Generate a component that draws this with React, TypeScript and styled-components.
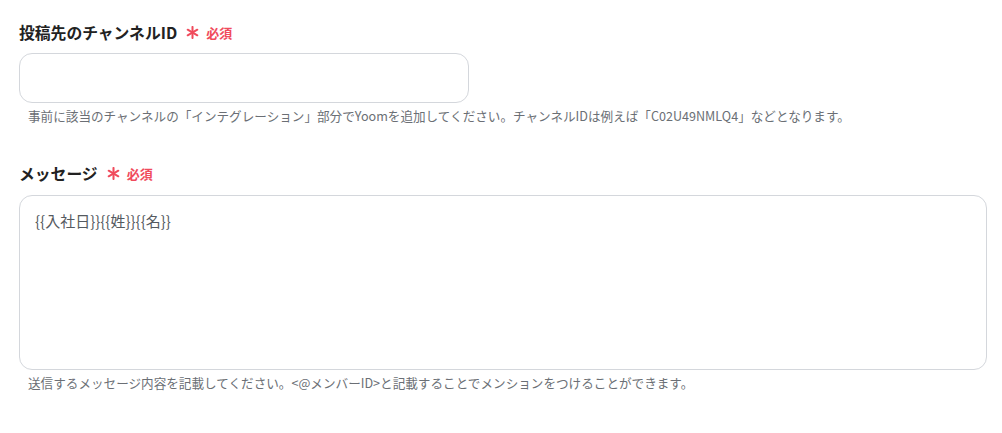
import React from "react";
import styled, { createGlobalStyle } from "styled-components";

const Global = createGlobalStyle`
  html, body { margin: 0; padding: 0; background: #ffffff; }
  body { font-family: "Noto Sans CJK JP", "Noto Sans", sans-serif; }
`;

const Page = styled.div`
  padding: 20px 0 0 19px;
  display: flex;
  flex-direction: column;
  gap: 36px;
  width: 968px;
`;

const Field = styled.div`
  display: flex;
  flex-direction: column;
`;

const LabelRow = styled.div<{ $gapBelow: number }>`
  display: flex;
  align-items: center;
  gap: 9px;
  height: 24px;
  margin-bottom: ${(p) => p.$gapBelow}px;
`;

const LabelText = styled.span`
  font-size: 15.8px;
  font-weight: 700;
  color: #222222;
`;

const Required = styled.span`
  display: flex;
  align-items: center;
  gap: 7px;
  color: #f04b5c;
  font-size: 13px;
  font-weight: 700;
`;

const Asterisk = styled.svg`
  width: 13px;
  height: 13px;
`;

const Box = styled.div<{ $w: string; $h: number }>`
  box-sizing: border-box;
  width: ${(p) => p.$w};
  height: ${(p) => p.$h}px;
  border: 1px solid #d4d7dc;
  border-radius: 13px;
  background: #fff;
  padding: 14px 15px;
  font-size: 15px;
  color: #555a60;
`;

const Help = styled.div`
  margin-top: 4px;
  padding-left: 9px;
  font-size: 12.6px;
  color: #6b6f75;
  line-height: 18px;
  white-space: nowrap;
`;

const Star = () => (
  <Asterisk viewBox="0 0 14 14">
    <g stroke="#f04b5c" strokeWidth="2.2" strokeLinecap="round">
      <line x1="7" y1="1" x2="7" y2="13" />
      <line x1="1.8" y1="4" x2="12.2" y2="10" />
      <line x1="1.8" y1="10" x2="12.2" y2="4" />
    </g>
  </Asterisk>
);

export default function App() {
  return (
    <>
      <Global />
      <Page>
        <Field>
          <LabelRow $gapBelow={9}>
            <LabelText>投稿先のチャンネルID</LabelText>
            <Required>
              <Star />
              必須
            </Required>
          </LabelRow>
          <Box $w="450px" $h={50} />
          <Help>
            事前に該当のチャンネルの「インテグレーション」部分でYoomを追加してください。チャンネルIDは例えば「C02U49NMLQ4」などとなります。
          </Help>
        </Field>
        <Field>
          <LabelRow $gapBelow={10}>
            <LabelText>メッセージ</LabelText>
            <Required>
              <Star />
              必須
            </Required>
          </LabelRow>
          <Box $w="968px" $h={175}>{"{{入社日}}{{姓}}{{名}}"}</Box>
          <Help>
            送信するメッセージ内容を記載してください。&lt;@メンバーID&gt;と記載することでメンションをつけることができます。
          </Help>
        </Field>
      </Page>
    </>
  );
}
